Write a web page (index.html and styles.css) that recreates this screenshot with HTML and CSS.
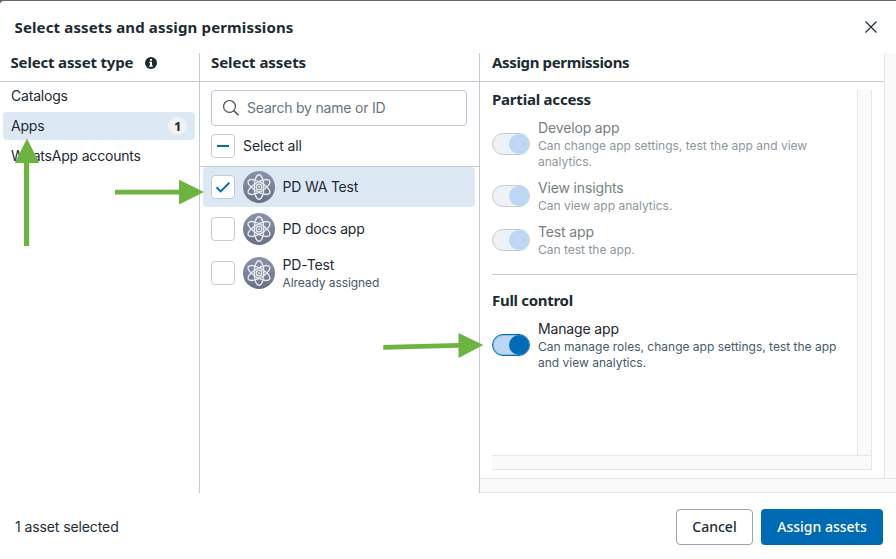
FILE: index.html
```html
<!DOCTYPE html>
<html lang="en">
<head>
<meta charset="utf-8">
<title>Select assets and assign permissions</title>
<link rel="stylesheet" href="styles.css">
</head>
<body>
<svg width="0" height="0" class="defs" aria-hidden="true">
  <defs>
    <linearGradient id="disc" x1="0" y1="0" x2="0" y2="1"><stop offset="0" stop-color="#8a94a8"/><stop offset="1" stop-color="#687084"/></linearGradient>
    <symbol id="atom" viewBox="0 0 32 32">
      <circle cx="16" cy="16" r="16" fill="url(#disc)"/>
      <g fill="none" stroke="#e6e9ef" stroke-width="1.4">
        <ellipse cx="16" cy="16" rx="4.800" ry="12.300"/>
        <ellipse cx="16" cy="16" rx="4.800" ry="12.300" transform="rotate(60 16 16)"/>
        <ellipse cx="16" cy="16" rx="4.800" ry="12.300" transform="rotate(-60 16 16)"/>
        <circle cx="16" cy="16" r="2.800" stroke-width="1.5"/>
      </g>
      <circle cx="16" cy="16" r="1" fill="#e6e9ef"/>
    </symbol>
  </defs>
</svg>
<div class="dialog">
  <header class="titlebar">
    <h1><span class="t-title">Select assets and assign permissions</span></h1>
    <svg class="close" width="14" height="14" viewBox="0 0 14 14"><path d="M1.500 1.500l11 11M12.500 1.500l-11 11" stroke="#1c2b33" stroke-width="1.2" fill="none"/></svg>
  </header>
  <main class="columns">
    <section class="col types">
      <h2 class="head"><span class="t-type">Select asset type</span>
        <svg class="info" width="12" height="12" viewBox="0 0 12 12"><circle cx="6" cy="6" r="6" fill="#1c2b33"/><path d="M5 1.900h2v1.800H5zM4.300 4.800H7v3.600h.8v1.300H4.200V8.400H5V6h-.7z" fill="#fff"/></svg>
      </h2>
      <ul class="type-list">
        <li>Catalogs</li>
        <li class="active">Apps<span class="count">1</span></li>
        <li>WhatsApp accounts</li>
      </ul>
    </section>
    <section class="col assets">
      <h2 class="head"><span class="t-assets">Select assets</span></h2>
      <div class="tools">
        <div class="search">
          <svg width="18" height="18" viewBox="0 0 18 18"><g fill="none" stroke="#444b50" stroke-width="1.2"><circle cx="7.500" cy="7.400" r="5.900"/><path d="M11.800 11.700l4.700 4.500" stroke-width="1.5"/></g></svg>
          <span class="t-search">Search by name or ID</span>
        </div>
        <div class="all"><span class="box"><i class="dash"></i></span><span>Select all</span></div>
      </div>
      <div class="asset selected">
        <span class="box"><svg width="16" height="14" viewBox="0 0 16 14"><path d="M1.500 7.200l4.200 4.200L14.400 2.600" fill="none" stroke="#006bb5" stroke-width="2"/></svg></span>
        <svg class="avatar"><use href="#atom"/></svg><span class="name">PD WA Test</span>
      </div>
      <div class="asset second">
        <span class="box"></span><svg class="avatar"><use href="#atom"/></svg><span class="name">PD docs app</span>
      </div>
      <div class="asset third">
        <span class="box"></span><svg class="avatar"><use href="#atom"/></svg>
        <div class="name"><div>PD-Test</div><div class="sub">Already assigned</div></div>
      </div>
    </section>
    <section class="perms">
      <div class="view">
        <h2 class="head"><span class="t-perms">Assign permissions</span></h2>
        <div class="inner">
          <div class="pane">
            <div class="partial">
              <h3><span class="t-partial">Partial access</span></h3>
              <div class="perm off tall"><i class="switch"></i><div class="copy"><div class="label">Develop app</div><p>Can change app settings, test the app and view<br>analytics.</p></div></div>
              <div class="perm off"><i class="switch"></i><div class="copy"><div class="label">View insights</div><p>Can view app analytics.</p></div></div>
              <div class="perm off"><i class="switch"></i><div class="copy"><div class="label">Test app</div><p>Can test the app.</p></div></div>
            </div>
            <div class="full">
              <h3><span class="t-full">Full control</span></h3>
              <div class="perm on"><i class="switch"></i><div class="copy"><div class="label">Manage app</div><p>Can manage roles, change app settings, test the app<br>and view analytics.</p></div></div>
            </div>
          </div>
          <div class="track-v inner-v"></div>
          <div class="track-h inner-h"></div>
        </div>
      </div>
      <div class="track-v"></div>
      <div class="track-h"></div>
    </section>
  </main>
  <footer>
    <span class="t-status">1 asset selected</span>
    <div class="buttons"><button class="cancel">Cancel</button><button class="assign">Assign assets</button></div>
  </footer>
</div>
<svg class="arrows" width="896" height="559" viewBox="0 0 896 559">
  <g fill="#6cb33f">
    <path d="M27 138.500L39.300 163H29.200V246H24V163H14.700Z"/>
    <path d="M204 192L179 204.500V194.600H115V189.800H179V179.700Z"/>
    <path d="M483.300 345L458.500 358V347.700L383.300 349.700V345L458.500 343V333Z"/>
  </g>
</svg>
</body>
</html>
```
FILE: styles.css
```css
* { box-sizing: border-box; }
body { margin: 0; width: 896px; height: 559px; overflow: hidden; background: #65646a; font: 14px/20px Inter, "Liberation Sans", sans-serif; letter-spacing: -0.2px; color: #1c2b33; }
h1, h2, h3, p, ul { margin: 0; padding: 0; }
ul { list-style: none; }
.defs { position: absolute; }
.dialog { margin-top: 1px; height: 558px; background: #fff; border-radius: 4px 0 0 0; display: flex; flex-direction: column; }
.titlebar { height: 52px; padding: 0 18px 0 14.5px; display: flex; align-items: center; justify-content: space-between; }
h1, h2, h3 { font: 700 15px/20px "Noto Sans", sans-serif; white-space: nowrap; }
h1 { letter-spacing: 0.14px; }
.t-type { letter-spacing: -0.17px; }
.t-assets { letter-spacing: -0.06px; }
.t-perms { letter-spacing: -0.35px; }
.t-partial { letter-spacing: -0.22px; }
.t-full { letter-spacing: -0.3px; }
.columns { height: 440px; display: grid; grid-template-columns: 200px 280px 416px; }
.col { border-right: 1px solid #c3ccd4; }
.head { height: 29px; padding: 0 0 10px 11px; border-bottom: 1px solid #c3ccd4; display: flex; align-items: center; gap: 12px; }
.head > span { margin-top: -1px; }
.info { margin-top: 1px; }
.types .head { padding-left: 10.5px; }
.perms .head { padding-left: 12px; }
.type-list li { height: 28px; margin: 0 4px 2px 3px; padding: 0 8px; border-radius: 4px; display: flex; align-items: center; justify-content: space-between; }
.active { background: #dce9f5; }
.count { width: 19px; height: 18px; border-radius: 9px; background: #f0f2f6; text-align: center; font: 700 13px/18px "Noto Sans", sans-serif; }
.tools { height: 85px; padding: 8px 12px 0 11px; border-bottom: 1px solid #c3ccd4; }
.search { height: 36px; border: 1px solid #bdc7d1; border-radius: 4px; display: flex; align-items: center; padding-left: 10px; gap: 7px; color: #67757c; }
.all { height: 40px; display: flex; align-items: center; gap: 8px; letter-spacing: -0.1px; }
.box { width: 24px; height: 24px; flex: none; border: 1px solid #c3ccd6; border-radius: 4px; background: #fff; display: flex; align-items: center; justify-content: center; }
.dash { width: 12px; height: 2px; background: #006bb5; }
.asset { display: flex; align-items: center; margin: 0 4px 0 3px; padding-left: 8px; height: 40px; border-radius: 4px; }
.selected { background: #dce9f5; }
.second { height: 44px; }
.third { height: 44px; }
.avatar { width: 32px; height: 32px; margin: 0 7.5px 0 8px; flex: none; }
.name { line-height: 18px; }
.third .name { letter-spacing: -0.1px; }
.name .sub { font-size: 12px; line-height: 17px; color: #465a69; letter-spacing: -0.08px; }
.perms { display: grid; grid-template: 425px 15px / 404px 12px; }
.track-v { background: #fafafa; border-left: 1px solid #e6e6e6; }
.track-h { grid-column: 1 / 3; background: #fafafa; border-top: 1px solid #e6e6e6; border-bottom: 1px solid #e6e6e6; }
.inner { margin: 8px 0 0 12px; width: 380px; display: grid; grid-template: 365px 15px / 365px 15px; }
.inner-v { border-right: 1px solid #e6e6e6; }
.inner-h { border-right: 1px solid #e6e6e6; }
.inner h3 { height: 20px; line-height: 18px; }
.partial { height: 185px; border-bottom: 1px solid #c3ccd4; }
.full { padding-top: 16px; }
.perm { display: flex; align-items: center; gap: 8px; height: 36px; margin-bottom: 8px; letter-spacing: -0.15px; }
.perm.tall { height: 52px; margin: 8px 0; }
.perm.on { height: 52px; margin-top: 8px; }
.copy { margin-bottom: -1px; }
.label { line-height: 18px; }
.perm p { padding-top: 1px; font-size: 12px; line-height: 16px; color: #465a69; letter-spacing: 0; white-space: nowrap; }
.off .label { color: #777f83; }
.perm.off p { color: #8d979e; }
.switch { width: 38px; height: 22px; flex: none; border: 1px solid #c3ccd4; border-radius: 11px; background: #eef2f8; display: flex; justify-content: flex-end; }
.switch::after { content: ""; width: 20px; height: 20px; border-radius: 50%; background: #bbd7f4; }
.on .switch { border-color: #006bb5; background: #bbd5f2; box-shadow: inset 0 0 0 1px #8fbde7; }
.on .switch::after { background: #006bb5; }
footer { height: 66px; padding: 2px 13px 0 15px; display: flex; align-items: center; justify-content: space-between; }
.t-status { letter-spacing: -0.1px; }
.buttons { display: flex; gap: 8px; }
button { height: 36px; padding: 0; border-radius: 4px; font: 500 14px/20px "Noto Sans", sans-serif; }
.cancel { width: 77px; border: 1px solid #98a5b5; background: #fff; color: #1c2b33; }
.assign { width: 122px; border: 0; background: #006bb5; color: #fff; }
.arrows { position: absolute; left: 0; top: 0; }
```
